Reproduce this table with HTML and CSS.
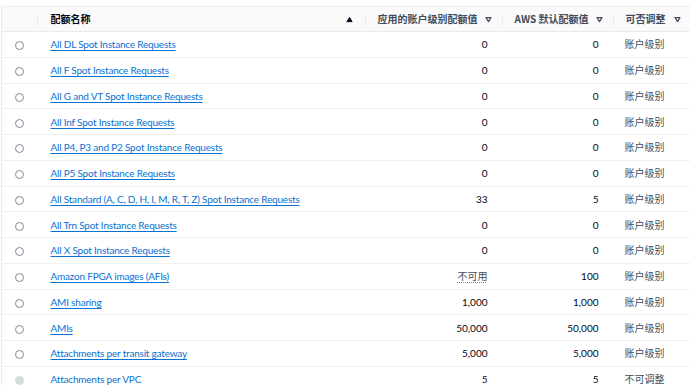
FILE: index.html
```html
<!DOCTYPE html>
<html lang="zh">
<head>
<meta charset="utf-8">
<link rel="stylesheet" href="styles.css">
</head>
<body>
<div class="wrap">
  <table class="quota">
    <colgroup>
      <col class="c-sel"><col class="c-name"><col class="c-applied"><col class="c-default"><col class="c-adj">
    </colgroup>
    <thead>
      <tr>
        <th class="sel"></th>
        <th class="name sorted"><div class="hd"><span>配额名称</span><svg class="ico" viewBox="0 0 8 8" width="7" height="7"><path d="M1 6.5 L4 1.5 L7 6.5 Z" fill="#000716" stroke="#000716" stroke-width="1" stroke-linejoin="round"/></svg></div></th>
        <th class="num"><div class="hd"><span>应用的账户级别配额值</span><svg class="ico" viewBox="0 0 8 8" width="7" height="7"><path d="M1.2 1.8 L6.8 1.8 L4 6.4 Z" fill="none" stroke="#414d5c" stroke-width="1.4" stroke-linejoin="round"/></svg></div></th>
        <th class="num"><div class="hd"><span>AWS 默认配额值</span><svg class="ico" viewBox="0 0 8 8" width="7" height="7"><path d="M1.2 1.8 L6.8 1.8 L4 6.4 Z" fill="none" stroke="#414d5c" stroke-width="1.4" stroke-linejoin="round"/></svg></div></th>
        <th class="adj"><div class="hd"><span>可否调整</span><svg class="ico" viewBox="0 0 8 8" width="7" height="7"><path d="M1.2 1.8 L6.8 1.8 L4 6.4 Z" fill="none" stroke="#414d5c" stroke-width="1.4" stroke-linejoin="round"/></svg></div></th>
      </tr>
    </thead>
    <tbody>
      <tr><td class="sel"><span class="radio"></span></td><td class="name"><a href="#">All DL Spot Instance Requests</a></td><td class="num">0</td><td class="num">0</td><td class="adj">账户级别</td></tr>
      <tr><td class="sel"><span class="radio"></span></td><td class="name"><a href="#">All F Spot Instance Requests</a></td><td class="num">0</td><td class="num">0</td><td class="adj">账户级别</td></tr>
      <tr><td class="sel"><span class="radio"></span></td><td class="name"><a href="#">All G and VT Spot Instance Requests</a></td><td class="num">0</td><td class="num">0</td><td class="adj">账户级别</td></tr>
      <tr><td class="sel"><span class="radio"></span></td><td class="name"><a href="#">All Inf Spot Instance Requests</a></td><td class="num">0</td><td class="num">0</td><td class="adj">账户级别</td></tr>
      <tr><td class="sel"><span class="radio"></span></td><td class="name"><a href="#">All P4, P3 and P2 Spot Instance Requests</a></td><td class="num">0</td><td class="num">0</td><td class="adj">账户级别</td></tr>
      <tr><td class="sel"><span class="radio"></span></td><td class="name"><a href="#">All P5 Spot Instance Requests</a></td><td class="num">0</td><td class="num">0</td><td class="adj">账户级别</td></tr>
      <tr><td class="sel"><span class="radio"></span></td><td class="name"><a href="#">All Standard (A, C, D, H, I, M, R, T, Z) Spot Instance Requests</a></td><td class="num">33</td><td class="num">5</td><td class="adj">账户级别</td></tr>
      <tr><td class="sel"><span class="radio"></span></td><td class="name"><a href="#">All Trn Spot Instance Requests</a></td><td class="num">0</td><td class="num">0</td><td class="adj">账户级别</td></tr>
      <tr><td class="sel"><span class="radio"></span></td><td class="name"><a href="#">All X Spot Instance Requests</a></td><td class="num">0</td><td class="num">0</td><td class="adj">账户级别</td></tr>
      <tr><td class="sel"><span class="radio"></span></td><td class="name"><a href="#">Amazon FPGA images (AFIs)</a></td><td class="num"><span class="na">不可用</span></td><td class="num">100</td><td class="adj">账户级别</td></tr>
      <tr><td class="sel"><span class="radio"></span></td><td class="name"><a href="#">AMI sharing</a></td><td class="num">1,000</td><td class="num">1,000</td><td class="adj">账户级别</td></tr>
      <tr><td class="sel"><span class="radio"></span></td><td class="name"><a href="#">AMIs</a></td><td class="num">50,000</td><td class="num">50,000</td><td class="adj">账户级别</td></tr>
      <tr><td class="sel"><span class="radio"></span></td><td class="name"><a href="#">Attachments per transit gateway</a></td><td class="num">5,000</td><td class="num">5,000</td><td class="adj">账户级别</td></tr>
      <tr><td class="sel"><span class="radio disabled"></span></td><td class="name"><a href="#">Attachments per VPC</a></td><td class="num">5</td><td class="num">5</td><td class="adj">不可调整</td></tr>
    </tbody>
  </table>
</div>
</body>
</html>
```

FILE: styles.css
```css
html, body {
  margin: 0;
  padding: 0;
  background: #ffffff;
}
body {
  font-family: "Lato", "Noto Sans CJK SC", sans-serif;
  font-size: 10px;
  color: #000716;
  overflow: hidden;
}
.wrap {
  padding-top: 6px;
  padding-left: 1px;
}
.quota {
  border-collapse: collapse;
  table-layout: fixed;
  width: 689px;
  border-left: 1px solid #e9ebed;
}
.c-sel { width: 35px; }
.c-name { width: 328px; }
.c-applied { width: 137px; }
.c-default { width: 111px; }
.c-adj { width: 78px; }

thead th {
  height: 24px;
  padding: 0;
  background: #fafafa;
  border-top: 1px solid #eef0f2;
  border-bottom: 1px solid #e9ebed;
  font-weight: 700;
  color: #414d5c;
  text-align: left;
  position: relative;
  font-family: "Noto Sans CJK SC", "Lato", sans-serif;
}
thead th + th::before {
  content: "";
  position: absolute;
  left: 0;
  top: 7px;
  bottom: 6px;
  border-left: 1px solid #e9ebed;
}
.hd {
  display: flex;
  align-items: center;
  justify-content: space-between;
  padding: 0 10px 0 13px;
  line-height: 14px;
}
th.name .hd { padding-left: 14px; padding-right: 12px; }
th.sorted { color: #000716; }
.ico { display: block; flex: none; }

tbody td {
  height: 24.75px;
  padding: 0;
  border-bottom: 1px solid #eef0f2;
  white-space: nowrap;
  vertical-align: middle;
  line-height: 14px;
}
td.sel { text-align: center; padding-left: 1px; }
td.sel .radio {
  display: inline-block;
  box-sizing: border-box;
  width: 9px;
  height: 9px;
  border: 1.3px solid #7d8998;
  border-radius: 50%;
  vertical-align: middle;
}
td.sel .radio.disabled {
  background: #d5dbdb;
  border-color: #d5dbdb;
}
td.name { padding-left: 14px; }
td.name a {
  color: #0972d3;
  letter-spacing: -0.2px;
  text-decoration: underline;
  text-decoration-thickness: 1px;
  text-underline-offset: 2px;
}
td.num {
  text-align: right;
  padding-right: 14px;
}
td.adj {
  padding-left: 12px;
  color: #414d5c;
}
.na {
  color: #414d5c;
  text-decoration: underline dotted #7d8998;
  text-underline-offset: 2px;
}
```
